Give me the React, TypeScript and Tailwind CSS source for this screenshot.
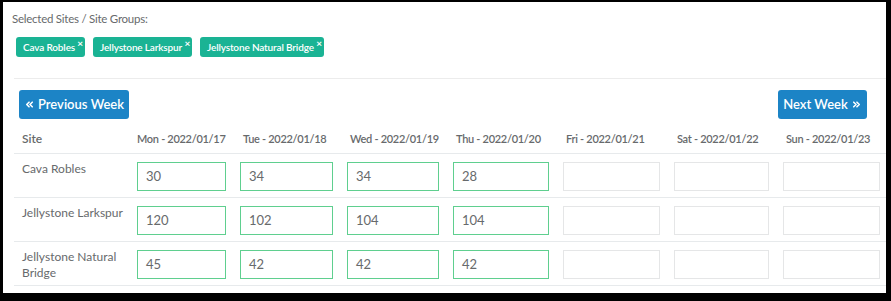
import React from "react";
import { ChevronsLeft, ChevronsRight } from "lucide-react";

const days = [
  "Mon - 2022/01/17",
  "Tue - 2022/01/18",
  "Wed - 2022/01/19",
  "Thu - 2022/01/20",
  "Fri - 2022/01/21",
  "Sat - 2022/01/22",
  "Sun - 2022/01/23",
];

const rows: { name: React.ReactNode; vals: string[] }[] = [
  { name: "Cava Robles", vals: ["30", "34", "34", "28"] },
  { name: "Jellystone Larkspur", vals: ["120", "102", "104", "104"] },
  { name: <>Jellystone Natural<br />Bridge</>, vals: ["45", "42", "42", "42"] },
];

const chips = ["Cava Robles", "Jellystone Larkspur", "Jellystone Natural Bridge"];

const grid = "grid grid-cols-[115px_103px_107px_106px_110px_111px_109px_111px]";

export default function App() {
  return (
    <div
      className="w-[891px] h-[301px] bg-black pt-[2px] pl-[3px] pr-[5px] pb-[8px] overflow-hidden"
      style={{ fontFamily: "Lato, 'Open Sans', sans-serif" }}
    >
      <div className="w-full h-full bg-white text-[#676a6c] pl-[11px] overflow-hidden">
        <div className="pt-[9px] text-[11.5px] tracking-[-0.25px] leading-[16px] -ml-[2px]">
          Selected Sites / Site Groups:
        </div>
        <div className="flex gap-[8px] mt-[10px] ml-[2px]">
          {chips.map((c) => (
            <div
              key={c}
              className="relative h-[20px] bg-[#1ab394] text-white rounded-[3px] pl-[7px] pr-[10px] text-[10px] tracking-[-0.15px] font-semibold leading-[20px]"
            >
              {c}
              <span className="absolute right-[2px] top-[-4px] text-[10px] font-bold">×</span>
            </div>
          ))}
        </div>
        <div className="h-px bg-[#ececec] mt-[21px]" />
        <div className="flex justify-between mt-[11px] pl-[5px] pr-[19px]">
          <button className="h-[29px] w-[110px] justify-center bg-[#1c84c6] text-white text-[13px] font-semibold rounded-[3px] flex items-center gap-[3px]">
            <ChevronsLeft size={11} strokeWidth={3.5} />
            Previous Week
          </button>
          <button className="h-[29px] w-[89px] justify-center bg-[#1c84c6] text-white text-[13px] font-semibold rounded-[3px] flex items-center gap-[3px]">
            Next Week
            <ChevronsRight size={11} strokeWidth={3.5} />
          </button>
        </div>
        <div className="mt-[9px]">
          <div className={`${grid} border-b border-[#e7eaec] h-[26px] items-start text-[11px] tracking-[-0.3px] font-semibold`}>
            <div className="pl-[8px] pt-[2px] leading-[18px] text-[12px] tracking-normal">Site</div>
            {days.map((d, k) => (
              <div key={d} className={`${k === 0 ? "pl-[8px]" : "pl-[11px]"} pt-[2px] leading-[18px] whitespace-nowrap`}>
                {d}
              </div>
            ))}
          </div>
          {rows.map((r, i) => (
            <div key={i} className={`${grid} border-b border-[#e7eaec] h-[44px] items-start`}>
              <div className="pl-[8px] pt-[7px] text-[12px] leading-[16px]">{r.name}</div>
              {Array.from({ length: 7 }).map((_, j) => {
                const v = r.vals[j];
                return (
                  <div key={j} className="pl-[8px] pr-[6px] pt-[8px]">
                    <div
                      className={`h-[29px] w-full border ${
                        v ? "border-[#5fcf8f]" : "border-[#e5e6e7]"
                      } flex items-center px-[8px] text-[13px] text-[#676a6c] bg-white`}
                    >
                      {v}
                    </div>
                  </div>
                );
              })}
            </div>
          ))}
        </div>
      </div>
    </div>
  );
}
